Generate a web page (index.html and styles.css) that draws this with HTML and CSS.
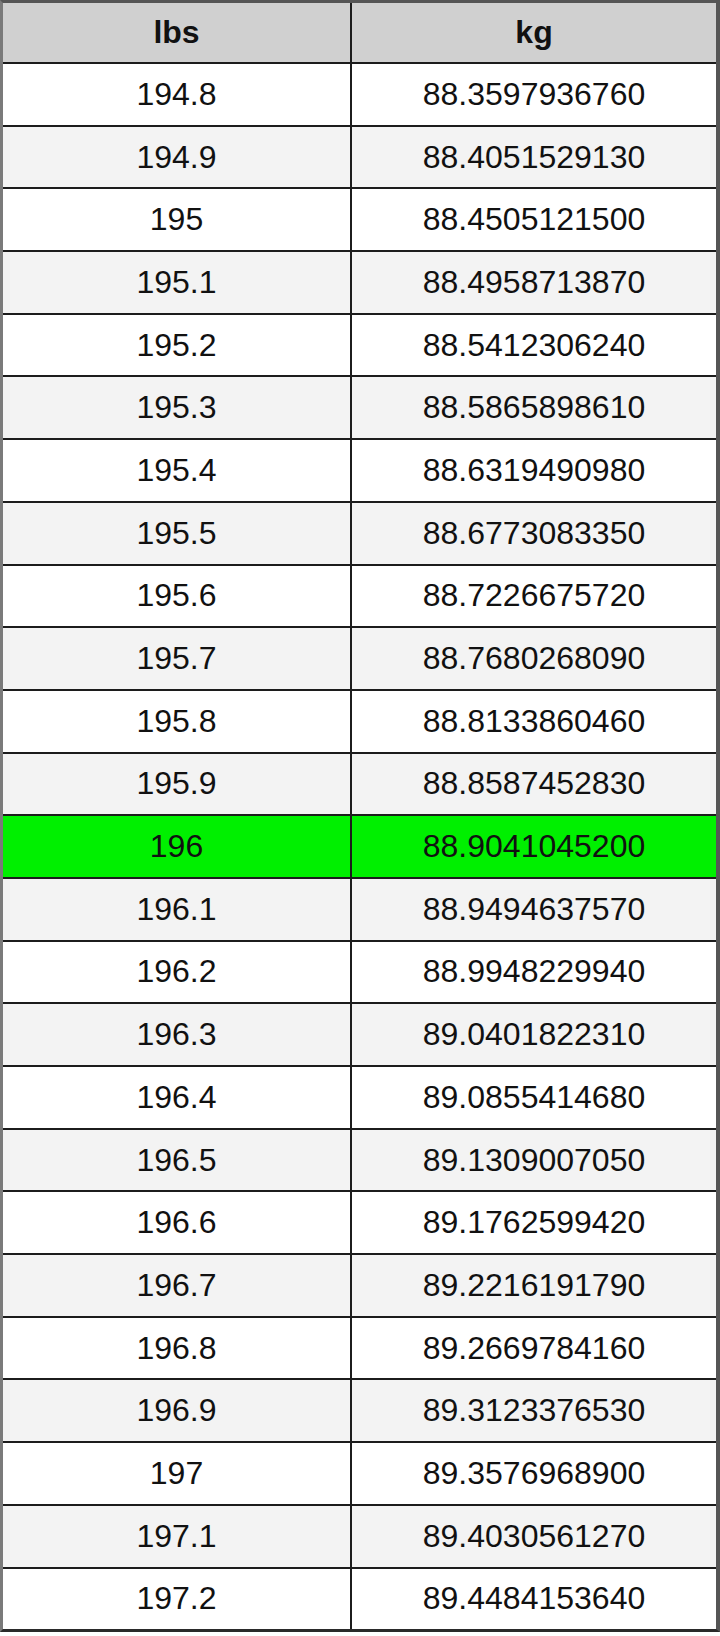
FILE: index.html
```html
<!DOCTYPE html>
<html>
<head>
<meta charset="utf-8">
<link rel="stylesheet" href="styles.css">
</head>
<body>
<div class="table">
  <div class="cell head">lbs</div><div class="cell head">kg</div>
  <div class="cell">194.8</div><div class="cell">88.3597936760</div>
  <div class="cell alt">194.9</div><div class="cell alt">88.4051529130</div>
  <div class="cell">195</div><div class="cell">88.4505121500</div>
  <div class="cell alt">195.1</div><div class="cell alt">88.4958713870</div>
  <div class="cell">195.2</div><div class="cell">88.5412306240</div>
  <div class="cell alt">195.3</div><div class="cell alt">88.5865898610</div>
  <div class="cell">195.4</div><div class="cell">88.6319490980</div>
  <div class="cell alt">195.5</div><div class="cell alt">88.6773083350</div>
  <div class="cell">195.6</div><div class="cell">88.7226675720</div>
  <div class="cell alt">195.7</div><div class="cell alt">88.7680268090</div>
  <div class="cell">195.8</div><div class="cell">88.8133860460</div>
  <div class="cell alt">195.9</div><div class="cell alt">88.8587452830</div>
  <div class="cell hl">196</div><div class="cell hl">88.9041045200</div>
  <div class="cell alt">196.1</div><div class="cell alt">88.9494637570</div>
  <div class="cell">196.2</div><div class="cell">88.9948229940</div>
  <div class="cell alt">196.3</div><div class="cell alt">89.0401822310</div>
  <div class="cell">196.4</div><div class="cell">89.0855414680</div>
  <div class="cell alt">196.5</div><div class="cell alt">89.1309007050</div>
  <div class="cell">196.6</div><div class="cell">89.1762599420</div>
  <div class="cell alt">196.7</div><div class="cell alt">89.2216191790</div>
  <div class="cell">196.8</div><div class="cell">89.2669784160</div>
  <div class="cell alt">196.9</div><div class="cell alt">89.3123376530</div>
  <div class="cell">197</div><div class="cell">89.3576968900</div>
  <div class="cell alt">197.1</div><div class="cell alt">89.4030561270</div>
  <div class="cell">197.2</div><div class="cell">89.4484153640</div>
</div>
</body>
</html>
```
FILE: styles.css
```css
html, body {
  margin: 0;
  padding: 0;
  background: #ffffff;
}
.table {
  width: 720px;
  box-sizing: border-box;
  display: grid;
  grid-template-columns: 347px 1fr;
  grid-auto-rows: 60.7px;
  grid-template-rows: 59px;
  gap: 2px;
  background: #1c1c1c;
  border-style: solid;
  border-width: 3px 4px 3px 3px;
  border-color: #555555 #555555 #2a2a2a #7a7a7a;
  font-family: "Liberation Sans", Arial, sans-serif;
  font-size: 32px;
  color: #111111;
}
.cell {
  background: #ffffff;
  display: flex;
  align-items: center;
  justify-content: center;
}
.cell.alt {
  background: #f3f3f3;
}
.cell.head {
  background: #d0d0d0;
  font-weight: bold;
}
.cell.hl {
  background: #00f000;
}
```
